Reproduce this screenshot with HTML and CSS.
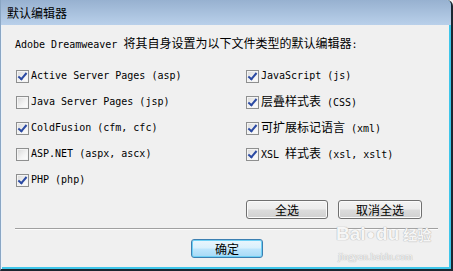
FILE: index.html
```html
<!DOCTYPE html>
<html>
<head>
<meta charset="utf-8">
<link rel="stylesheet" href="styles.css">
</head>
<body>
<div class="window">
  <div class="titlebar"><span class="cjk">默认编辑器</span></div>
  <div class="content">
    <div class="intro">Adobe Dreamweaver <span class="cjk">将其自身设置为以下文件类型的默认编辑器</span>:</div>
    <div class="grid">
      <div class="item"><span class="cb on"></span><span>Active Server Pages (asp)</span></div>
      <div class="item"><span class="cb on"></span><span>JavaScript (js)</span></div>
      <div class="item"><span class="cb"></span><span>Java Server Pages (jsp)</span></div>
      <div class="item"><span class="cb on"></span><span><span class="cjk">层叠样式表</span> (CSS)</span></div>
      <div class="item"><span class="cb on"></span><span>ColdFusion (cfm, cfc)</span></div>
      <div class="item"><span class="cb on"></span><span><span class="cjk">可扩展标记语言</span> (xml)</span></div>
      <div class="item"><span class="cb"></span><span>ASP.NET (aspx, ascx)</span></div>
      <div class="item"><span class="cb on"></span><span>XSL <span class="cjk">样式表</span> (xsl, xslt)</span></div>
      <div class="item"><span class="cb on"></span><span>PHP (php)</span></div>
    </div>
    <div class="actions">
      <button class="btn w82"><span class="cjk">全选</span></button>
      <button class="btn w84"><span class="cjk">取消全选</span></button>
    </div>
    <div class="sep"></div>
    <div class="footer">
      <button class="btn ok"><span class="cjk">确定</span></button>
    </div>
  </div>
  <div class="wm">
    <div class="wm-top"><span>Bai</span><span class="paw">&#9679;</span><span>du</span><span class="cjk wm-cjk">经验</span></div>
    <div class="wm-url">jingyan.baidu.com</div>
  </div>
</div>
</body>
</html>
```
FILE: styles.css
```css
html, body {
  margin: 0;
  padding: 0;
  background: #f0f0f0;
}
body {
  font-family: "DejaVu Sans Mono", "Liberation Mono", monospace;
  font-size: 10px;
  color: #000;
}
.cjk {
  font-family: "Noto Sans CJK SC", sans-serif;
  font-size: 12px;
}
.window {
  position: relative;
  width: 453px;
  height: 271px;
  box-sizing: border-box;
  background: #f0f0f0;
  border-left: 1px solid #8aa6c4;
  border-right: 2px solid #1c2630;
  border-bottom: 2px solid #1c2630;
  border-top-right-radius: 6px;
  box-shadow: inset 1px 0 0 #eaf2fa, inset -2px -2px 0 #3ec6ea;
  display: flex;
  flex-direction: column;
  overflow: hidden;
}
.titlebar {
  height: 25px;
  line-height: 25px;
  padding-left: 6px;
  background: linear-gradient(#97b1d0, #b9d0ea);
  color: #000;
  flex: none;
}
.content {
  padding: 0 0 0 14px;
  display: flex;
  flex-direction: column;
}
.intro {
  margin-top: 11px;
  height: 14px;
  line-height: 14px;
  white-space: nowrap;
}
.grid {
  margin-top: 13px;
  margin-left: 1px;
  display: grid;
  grid-template-columns: 230px 190px;
  grid-auto-rows: 26px;
}
.item {
  display: flex;
  align-items: center;
  gap: 2px;
  height: 26px;
  line-height: 14px;
  white-space: nowrap;
}
.cb {
  width: 13px;
  height: 13px;
  box-sizing: border-box;
  border: 1px solid #8e8f8f;
  background: linear-gradient(135deg, #d8d8d8 0%, #f4f4f4 60%, #fdfdfd 100%);
  box-shadow: inset 0 0 0 1px #f4f4f4;
  position: relative;
  flex: none;
}
.cb.on::after {
  content: "";
  position: absolute;
  left: 3px;
  top: 0px;
  width: 3px;
  height: 7px;
  border-right: 2px solid #2b4aa3;
  border-bottom: 2px solid #2b4aa3;
  transform: rotate(40deg);
}
.actions {
  margin-top: 7px;
  display: flex;
  justify-content: flex-end;
  gap: 10px;
  padding-right: 29px;
}
.btn {
  height: 19px;
  box-sizing: border-box;
  border: 1px solid #707070;
  border-radius: 3px;
  background: linear-gradient(#f3f3f3 0%, #ececec 48%, #dcdcdc 52%, #d0d0d0 100%);
  box-shadow: inset 0 0 0 1px #fbfbfb;
  padding: 0;
  display: flex;
  align-items: center;
  justify-content: center;
  line-height: 14px;
  color: #000;
}
.w82 { width: 82px; }
.w84 { width: 84px; }
.sep {
  margin-top: 9px;
  width: 423px;
  height: 1px;
  background: #a0a0a0;
  border-bottom: 1px solid #fdfdfd;
}
.footer {
  margin-top: 9px;
  display: flex;
  padding-left: 176px;
}
.btn.ok {
  width: 72px;
  border: 1px solid #3c7fb1;
  background: linear-gradient(#eaf6fd 0%, #d9f0fc 48%, #bee6fd 52%, #a7d9f5 100%);
  box-shadow: inset 0 0 0 1px #6ed0f5;
}
.wm {
  position: absolute;
  left: 335px;
  top: 223px;
  color: #f6f6f6;
  text-shadow: 0 0 1px #b4b4b4, 0 0 1px #b4b4b4;
  font-family: "Liberation Sans", sans-serif;
  pointer-events: none;
}
.wm-top {
  display: flex;
  align-items: center;
  font-size: 19px;
  font-weight: bold;
  line-height: 22px;
}
.paw {
  font-size: 14px;
  margin: 0 1px;
}
.wm-cjk {
  font-size: 14px;
  margin-left: 4px;
}
.wm-url {
  font-family: "Liberation Serif", serif;
  font-size: 10px;
  margin-top: 6px;
  margin-left: 2px;
}
```
